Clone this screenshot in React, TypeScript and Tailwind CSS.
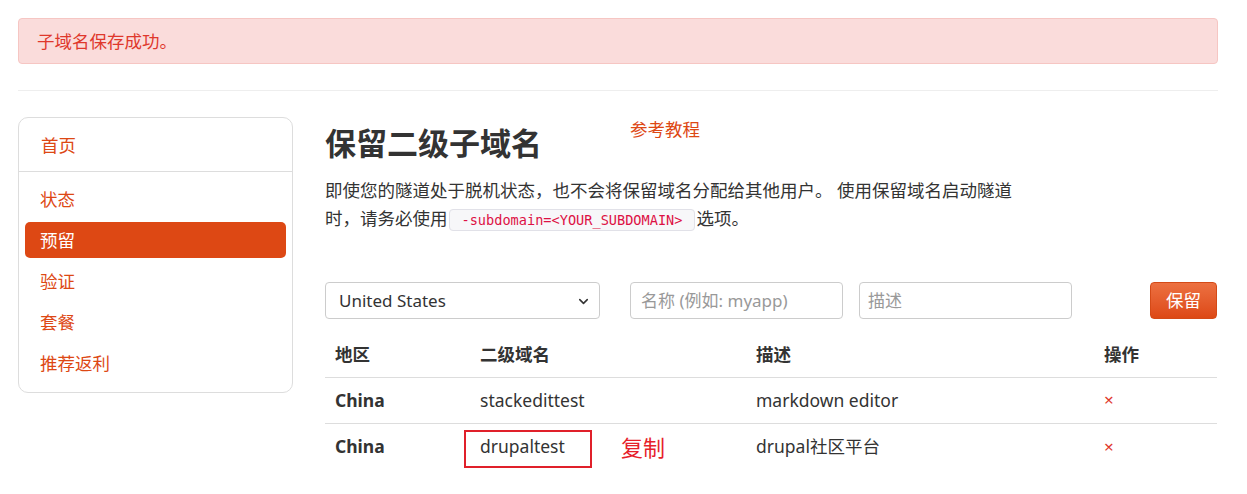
import { ChevronDown } from 'lucide-react';

const font = { fontFamily: '"Noto Sans", "Noto Sans CJK SC", sans-serif' };

const navItems = ['状态', '预留', '验证', '套餐', '推荐返利'];

const rows = [
  { region: 'China', sub: 'stackedittest', desc: 'markdown editor' },
  { region: 'China', sub: 'drupaltest', desc: 'drupal社区平台', marked: true },
];

function Sidebar() {
  return (
    <aside className="w-[275px] shrink-0 self-start rounded-[10px] border border-[#dddddd] bg-white">
      <div className="px-[7px] pt-[9px] pb-[8px]">
        <a className="flex h-9 items-center px-[15px] text-[17.5px] text-[#dd4814]">首页</a>
      </div>
      <div className="border-t border-[#dddddd]" />
      <ul className="flex flex-col gap-[5px] px-[6px] pt-[9px] pb-[11px]">
        {navItems.map((n) => (
          <li key={n}>
            <a
              className={
                n === '预留'
                  ? 'flex h-9 items-center rounded-[5px] bg-[#dd4814] px-[15px] text-[17.5px] text-white'
                  : 'flex h-9 items-center px-[15px] text-[17.5px] text-[#dd4814]'
              }
            >
              {n}
            </a>
          </li>
        ))}
      </ul>
    </aside>
  );
}

function ReserveForm() {
  return (
    <div className="mt-[48px] flex h-[37px] items-stretch">
      <div className="relative w-[275px] rounded-[4px] border border-[#cccccc] bg-white">
        <div className="flex h-full items-center pl-[13px] text-[17px] text-[#333333]">United States</div>
        <ChevronDown className="absolute right-[8px] top-[11px] h-[15px] w-[15px] text-[#333333]" strokeWidth={2.5} />
      </div>
      <input
        className="ml-[30px] w-[213px] rounded-[4px] border border-[#cccccc] px-[10px] text-[17px] text-[#333333] outline-none placeholder:text-[#999999]"
        placeholder="名称 (例如: myapp)"
      />
      <input
        className="ml-[16px] w-[213px] rounded-[4px] border border-[#cccccc] px-[8px] text-[17px] text-[#333333] outline-none placeholder:text-[#999999]"
        placeholder="描述"
      />
      <button className="ml-auto w-[67px] rounded-[4px] border border-[#d44a17] bg-gradient-to-b from-[#ec7040] to-[#dd4814] text-[17.5px] text-white">
        保留
      </button>
    </div>
  );
}

function DomainTable() {
  return (
    <table className="mt-[13px] w-full border-collapse text-[17.5px] text-[#333333]">
      <thead>
        <tr className="h-[45px] border-b border-[#dddddd] text-left">
          <th className="w-[145px] px-[10px] font-bold">地区</th>
          <th className="w-[276px] px-[10px] font-bold">二级域名</th>
          <th className="w-[348px] px-[10px] font-bold">描述</th>
          <th className="px-[10px] font-bold">操作</th>
        </tr>
      </thead>
      <tbody>
        {rows.map((r, i) => (
          <tr key={r.sub} className={i === 0 ? 'h-[46px] border-b border-[#dddddd]' : 'h-[46px]'}>
            <td className="px-[10px] font-bold">{r.region}</td>
            <td className="relative px-[10px]">
              {r.sub}
              {r.marked && (
                <>
                  <div className="absolute left-[-6px] top-[6px] h-[38px] w-[128px] border-2 border-[#e0202a]" />
                  <span className="absolute left-[151px] top-[8px] text-[22px] leading-[30px] text-[#e6212a]">复制</span>
                </>
              )}
            </td>
            <td className="px-[10px]">{r.desc}</td>
            <td className="px-[10px] text-[17px] text-[#df382c]">×</td>
          </tr>
        ))}
      </tbody>
    </table>
  );
}

export default function App() {
  return (
    <div className="min-h-[494px] bg-white pt-[18px]" style={font}>
      <div className="ml-[18px] w-[1200px]">
        <div className="flex h-[46px] items-center rounded-[4px] border border-[#f6c6c3] bg-[#fadcdb] px-[18px] text-[17.5px] text-[#df382c]">
          子域名保存成功。
        </div>
        <div className="mt-[26px] border-t border-[#eeeeee]" />

        <div className="mt-[26px] flex gap-[32px]">
          <Sidebar />
          <main className="w-[892px]">
            <div className="flex items-start">
              <h3 className="flex h-[52px] items-center text-[31px] font-bold text-[#333333]">保留二级子域名</h3>
              <a className="ml-[88px] text-[17.5px] leading-[25px] text-[#dd4814]">参考教程</a>
            </div>
            <p className="mt-[7px] w-[695px] text-[17.5px] leading-[28px] text-[#333333]">
              即使您的隧道处于脱机状态，也不会将保留域名分配给其他用户。 使用保留域名启动隧道时，请务必使用
              <code
                className="mx-[1px] rounded-[4px] border border-[#e1e1e8] bg-[#f7f7f9] px-[12px] py-[2px] text-[13.6px] text-[#dd1144]"
                style={{ fontFamily: '"DejaVu Sans Mono", monospace' }}
              >
                -subdomain=&lt;YOUR_SUBDOMAIN&gt;
              </code>
              选项。
            </p>
            <ReserveForm />
            <DomainTable />
          </main>
        </div>
      </div>
    </div>
  );
}
